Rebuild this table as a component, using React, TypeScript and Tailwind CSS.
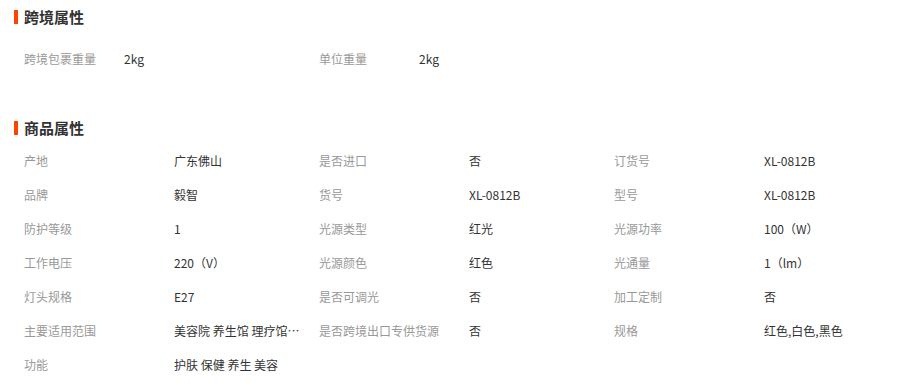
import React from "react";

const font = { fontFamily: '"Microsoft YaHei", "Noto Sans CJK SC", "Liberation Sans", sans-serif' };

type Pair = [string, string];

const rows: Pair[][] = [
  [["产地", "广东佛山"], ["是否进口", "否"], ["订货号", "XL-0812B"]],
  [["品牌", "毅智"], ["货号", "XL-0812B"], ["型号", "XL-0812B"]],
  [["防护等级", "1"], ["光源类型", "红光"], ["光源功率", "100（W）"]],
  [["工作电压", "220（V）"], ["光源颜色", "红色"], ["光通量", "1（lm）"]],
  [["灯头规格", "E27"], ["是否可调光", "否"], ["加工定制", "否"]],
  [["主要适用范围", "美容院 养生馆 理疗馆 美容会所"], ["是否跨境出口专供货源", "否"], ["规格", "红色,白色,黑色"]],
  [["功能", "护肤 保健 养生 美容"]],
];

function Title({ text }: { text: string }) {
  return (
    <div className="flex items-center h-[20px] pl-[14px]">
      <span className="w-[4px] h-[14px] bg-[#ff4400] mr-[6px]" />
      <span className="text-[15px] font-bold text-[#333333] leading-[20px]">{text}</span>
    </div>
  );
}

export default function App() {
  return (
    <div className="w-[920px] h-[392px] bg-white pt-[7px]" style={font}>
      <Title text="跨境属性" />
      <div className="flex pl-[24px] mt-[15px] h-[34px] items-center text-[12px]">
        <div className="flex w-[295px]">
          <span className="w-[100px] text-[#999999]">跨境包裹重量</span>
          <span className="text-[#333333]">2kg</span>
        </div>
        <div className="flex w-[295px]">
          <span className="w-[100px] text-[#999999]">单位重量</span>
          <span className="text-[#333333]">2kg</span>
        </div>
      </div>
      <div className="mt-[42px]">
        <Title text="商品属性" />
      </div>
      <div className="mt-[6px] pl-[24px] text-[12px]">
        {rows.map((r, i) => (
          <div key={i} className="flex h-[34px] items-center">
            {r.map(([k, v], j) => (
              <div key={j} className="flex w-[295px]">
                <span className="w-[150px] text-[#999999] whitespace-nowrap">{k}</span>
                <span className="w-[126px] text-[#333333] whitespace-nowrap overflow-hidden text-ellipsis">{v}</span>
              </div>
            ))}
          </div>
        ))}
      </div>
    </div>
  );
}
